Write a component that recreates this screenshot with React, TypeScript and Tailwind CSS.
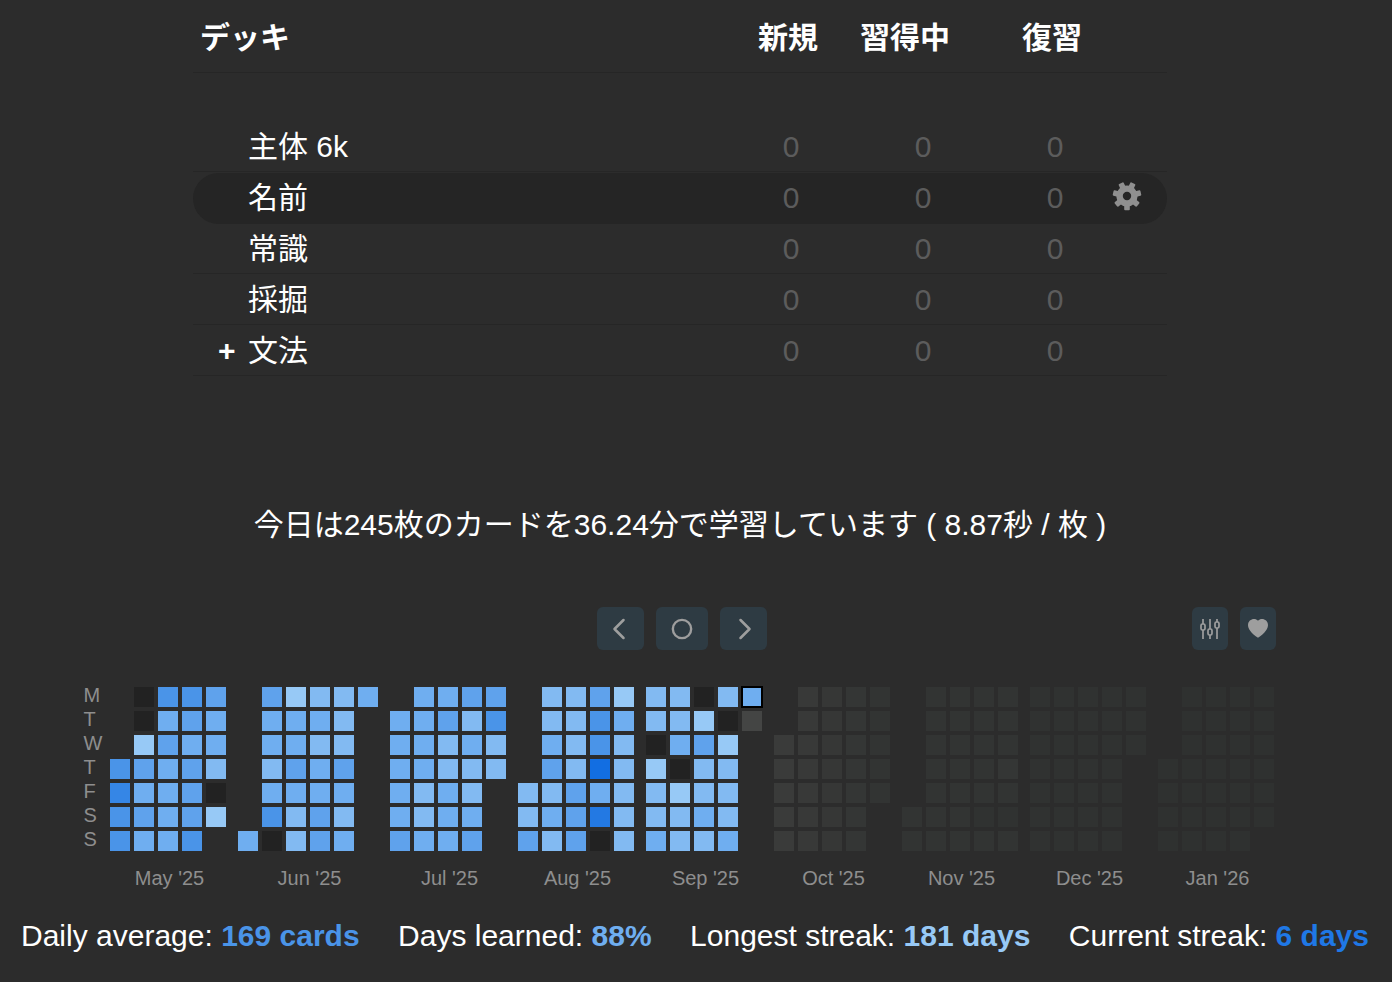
import { ChevronLeft, ChevronRight, Circle } from 'lucide-react';
import { BsHeartFill } from 'react-icons/bs';

const decks = [
  { name: '主体 6k' },
  { name: '名前', active: true },
  { name: '常識' },
  { name: '採掘' },
  { name: '文法', plus: true },
];

const days = ['M', 'T', 'W', 'T', 'F', 'S', 'S'];

// one letter per day, written row by row, "_" is an empty slot
const cellColors: Record<string, string> = {
  a: 'bg-[#97c9f6]',
  b: 'bg-[#82baf2]',
  c: 'bg-[#6faef0]',
  d: 'bg-[#5fa2ec]',
  e: 'bg-[#4a94e8]',
  f: 'bg-[#3586e6]',
  g: 'bg-[#2379e3]',
  h: 'bg-[#126ee2]',
  x: 'bg-[#222222]',
  y: 'bg-[#444544]',
  z: 'bg-[#6faef0] outline-2 outline-black -outline-offset-1',
  p: 'bg-[#3a3b3a]',
  q: 'bg-[#383938]',
  r: 'bg-[#363736]',
  s: 'bg-[#343635]',
  t: 'bg-[#323433]',
  u: 'bg-[#303231]',
  v: 'bg-[#2f3130]',
};

const months = [
  { label: "May '25", cols: 'grid-cols-[repeat(5,20px)]', rows: ['_xeed', '_xcdc', '_adcc', 'edcdb', 'fccdx', 'edcda', 'ecce_'] },
  { label: "Jun '25", cols: 'grid-cols-[repeat(6,20px)]', rows: ['_dabbc', '_cccb_', '_ccbb_', '_bdcd_', '_cccc_', '_ebdb_', 'cxbdc_'] },
  { label: "Jul '25", cols: 'grid-cols-[repeat(5,20px)]', rows: ['_ccdd', 'ccdbe', 'ccbcb', 'ccbbb', 'cbcb_', 'cbcc_', 'dccd_'] },
  { label: "Aug '25", cols: 'grid-cols-[repeat(5,20px)]', rows: ['_bbda', '_bbec', '_cbeb', '_dbhb', 'bbdcb', 'bcdgb', 'dbdxb'] },
  { label: "Sep '25", cols: 'grid-cols-[repeat(5,20px)]', rows: ['bbxbz', 'bbaxy', 'xcda_', 'axbb_', 'babb_', 'bbcb_', 'cbbc_'] },
  { label: "Oct '25", cols: 'grid-cols-[repeat(5,20px)]', rows: ['_qrst', '_qrst', 'pqrst', 'pqrst', 'pqrst', 'pqrs_', 'pqrs_'] },
  { label: "Nov '25", cols: 'grid-cols-[repeat(5,20px)]', rows: ['_tttt', '_tttt', '_tttt', '_ttts', '_tttt', 'tttuu', 'ttttt'] },
  { label: "Dec '25", cols: 'grid-cols-[repeat(5,20px)]', rows: ['uuuuu', 'uuuuu', 'uuuuu', 'uuuu_', 'uuuu_', 'uuuu_', 'uuuu_'] },
  { label: "Jan '26", cols: 'grid-cols-[repeat(5,20px)]', rows: ['_vvvv', '_vvvv', '_vvvv', 'vvvvv', 'vvvvv', 'vvvvv', 'vvvv_'] },
];

const stats = [
  { label: 'Daily average:', value: '169 cards', color: 'text-[#4a94e8]' },
  { label: 'Days learned:', value: '88%', color: 'text-[#6faef0]' },
  { label: 'Longest streak:', value: '181 days', color: 'text-[#97c9f6]' },
  { label: 'Current streak:', value: '6 days', color: 'text-[#1f78e6]' },
];

function NavButton({ className, children }: { className: string; children: React.ReactNode }) {
  return (
    <button className={`h-[43px] flex items-center justify-center rounded-md bg-[#2e3b43] text-[#9e9e9e] ${className}`}>
      {children}
    </button>
  );
}

function SlidersIcon() {
  return (
    <svg width="20" height="22" viewBox="0 0 20 22" fill="none" stroke="currentColor" strokeWidth="1.7">
      <path d="M3 1v5M3 12v9M10 1v10M10 17v4M17 1v3M17 10v11" />
      <rect x="1" y="6" width="4" height="6" rx="1.5" />
      <rect x="8" y="11" width="4" height="6" rx="1.5" />
      <rect x="15" y="4" width="4" height="6" rx="1.5" />
    </svg>
  );
}

// seven teeth, one pointing straight down
function GearIcon() {
  return (
    <svg width="30" height="30" viewBox="0 0 30 30" className="-ml-[9px] -mt-[2px] text-[#8f8f8f]">
      <circle cx="15" cy="15" r="7.4" fill="none" stroke="currentColor" strokeWidth="6.4" />
      {[0, 1, 2, 3, 4, 5, 6].map((i) => (
        <rect
          key={i}
          x="12.2"
          y="0.8"
          width="5.6"
          height="6"
          rx="1"
          fill="currentColor"
          transform={`rotate(${180 + (i * 360) / 7} 15 15)`}
        />
      ))}
    </svg>
  );
}

export default function App() {
  return (
    <div className="w-[1392px] h-[982px] overflow-hidden bg-[#2c2c2c] font-['Liberation_Sans','Noto_Sans_CJK_JP',sans-serif]">
      <div className="w-[1360px] flex flex-col items-center">
        {/* Deck table */}
        <div className="w-[974px]">
          <div className="h-[73px] flex items-center pt-[3px] border-b border-[#262626] text-[30px] font-bold text-white">
            <div className="w-[532px] pl-[7px]">デッキ</div>
            <div className="w-[126px] pl-[33px]">新規</div>
            <div className="w-[171px] pl-[9px]">習得中</div>
            <div>復習</div>
          </div>
          <div className="h-[48px]" />
          {decks.map((deck) => (
            <div
              key={deck.name}
              className={`h-[51px] flex items-center border-b text-[30px] ${
                deck.active
                  ? 'mt-[1px] -mb-[1px] pb-[2px] rounded-full border-transparent bg-[#252525]'
                  : 'border-[#262626]'
              }`}
            >
              <div className="w-[532px] flex items-center text-white">
                <span className="w-[55px] pl-[25px] font-bold">{deck.plus ? '+' : ''}</span>
                {deck.name}
              </div>
              {[0, 1, 2].map((i) => (
                <div key={i} className="w-[132px] text-center text-[#5c5c5c]">
                  0
                </div>
              ))}
              {deck.active && <GearIcon />}
            </div>
          ))}
        </div>

        <div className="mt-[123px] h-[50px] flex items-center text-[30px] text-white whitespace-nowrap">
          今日は245枚のカードを36.24分で学習しています ( 8.87秒 / 枚 )
        </div>

        {/* Heatmap controls */}
        <div className="mt-[58px] w-[1191px] flex items-center">
          <div className="flex-1" />
          <div className="flex gap-3 ml-[3px]">
            <NavButton className="w-[47px] pr-[3px]">
              <ChevronLeft size={36} strokeWidth={1.7} />
            </NavButton>
            <NavButton className="w-[52px]">
              <Circle size={22} strokeWidth={2.6} />
            </NavButton>
            <NavButton className="w-[47px] pl-[3px]">
              <ChevronRight size={36} strokeWidth={1.7} />
            </NavButton>
          </div>
          <div className="flex-1 flex justify-end gap-3">
            <NavButton className="w-9">
              <SlidersIcon />
            </NavButton>
            <NavButton className="w-9">
              <BsHeartFill size={20} />
            </NavButton>
          </div>
        </div>

        {/* Heatmap */}
        <div className="mt-[33px] w-[1191px] flex text-[20px] text-[#8e8e8e]">
          <div className="w-[25px] shrink-0 -ml-[1px] mr-[1px]">
            {days.map((day, i) => (
              <div key={i} className="h-6 leading-6">
                {day}
              </div>
            ))}
          </div>
          <div className="flex gap-2">
            {months.map((month) => (
              <div key={month.label} className="flex flex-col items-center">
                <div className={`grid ${month.cols} auto-rows-[20px] gap-1 pt-1 pr-1`}>
                  {month.rows.join('').split('').map((c, i) =>
                    c === '_' ? <div key={i} /> : <div key={i} className={cellColors[c]} />
                  )}
                </div>
                <div className="mt-[15px] h-6 leading-6 whitespace-nowrap">{month.label}</div>
              </div>
            ))}
          </div>
        </div>
      </div>

      {/* Summary stats */}
      <div className="mt-[25px] h-[40px] pr-[2px] flex items-center justify-center gap-[38.5px] text-[30px] text-white whitespace-nowrap">
        {stats.map((stat) => (
          <div key={stat.label}>
            {stat.label} <span className={`font-bold ${stat.color}`}>{stat.value}</span>
          </div>
        ))}
      </div>
    </div>
  );
}
